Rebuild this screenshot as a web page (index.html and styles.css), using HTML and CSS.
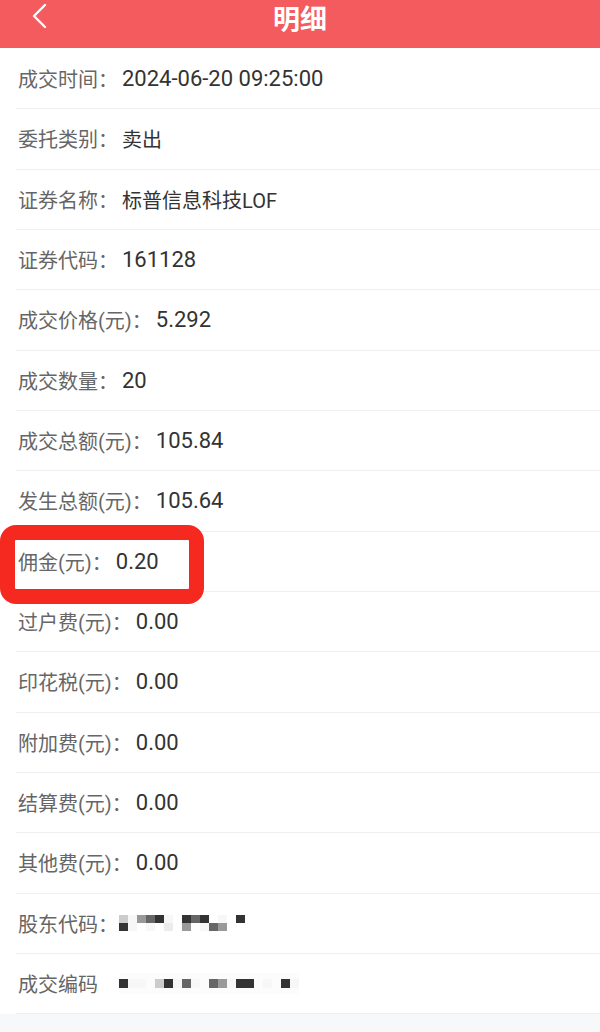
FILE: index.html
```html
<!DOCTYPE html>
<html lang="zh-CN">
<head>
    <meta charset="UTF-8">
    <meta name="viewport" content="width=device-width, initial-scale=1.0">
    <title>明细</title>
    <link rel="stylesheet" href="styles.css">
</head>
<body>
<div class="page">
    <header class="topbar">
        <a class="back" href="#">
            <svg width="16" height="26" viewBox="0 0 16 26">
                <polyline points="13,2 2,13 13,24" fill="none" stroke="#fff" stroke-width="2.4" stroke-linecap="round" stroke-linejoin="round"/>
            </svg>
        </a>
        <h1 class="title">明细</h1>
        <span></span>
    </header>

    <ul class="detail-list">
        <li class="row"><span class="label">成交时间：</span><span class="value">2024-06-20 09:25:00</span></li>
        <li class="row"><span class="label">委托类别：</span><span class="value cn">卖出</span></li>
        <li class="row"><span class="label">证券名称：</span><span class="value cn">标普信息科技LOF</span></li>
        <li class="row"><span class="label">证券代码：</span><span class="value">161128</span></li>
        <li class="row"><span class="label">成交价格(元)：</span><span class="value">5.292</span></li>
        <li class="row"><span class="label">成交数量：</span><span class="value">20</span></li>
        <li class="row"><span class="label">成交总额(元)：</span><span class="value">105.84</span></li>
        <li class="row"><span class="label">发生总额(元)：</span><span class="value">105.64</span></li>
        <li class="row"><span class="label">佣金(元)：</span><span class="value">0.20</span></li>
        <li class="row"><span class="label">过户费(元)：</span><span class="value">0.00</span></li>
        <li class="row"><span class="label">印花税(元)：</span><span class="value">0.00</span></li>
        <li class="row"><span class="label">附加费(元)：</span><span class="value">0.00</span></li>
        <li class="row"><span class="label">结算费(元)：</span><span class="value">0.00</span></li>
        <li class="row"><span class="label">其他费(元)：</span><span class="value">0.00</span></li>
        <li class="row">
            <span class="label">股东代码：</span>
            <span class="mosaic">
                <i class="l"></i><i class="f"></i><i class="s"></i><i class="g"></i><i class="d"></i><i class="f"></i><i></i><i class="d"></i><i class="g"></i><i class="d"></i><i></i><i class="f"></i><i></i><i class="d"></i>
                <i class="d"></i><i class="f"></i><i></i><i class="f"></i><i></i><i class="e"></i><i></i><i class="s"></i><i></i><i class="f"></i><i class="g"></i><i class="s"></i><i></i><i></i>
            </span>
        </li>
        <li class="row">
            <span class="label">成交编码</span>
            <span class="mosaic wide">
                <i class="d"></i><i class="f"></i><i class="f"></i><i></i><i class="l"></i><i class="d"></i><i class="f"></i><i class="g"></i><i class="f"></i><i></i><i class="g"></i><i class="s"></i><i class="f"></i><i class="d"></i><i class="d"></i><i></i><i class="f"></i><i></i><i class="d"></i><i class="f"></i>
            </span>
        </li>
    </ul>

    <div class="mark"></div>
</div>
</body>
</html>
```

FILE: styles.css
```css
body {
    margin: 0;
    background-color: #f7f8fa;
    font-family: Roboto, "Noto Sans CJK SC", sans-serif;
}

.page {
    position: relative;
    width: 600px;
}

.topbar {
    height: 48px;
    background-color: #f35b5e;
    display: grid;
    grid-template-columns: 1fr auto 1fr;
    align-items: start;
    padding: 0 32px;
    box-sizing: border-box;
}

.back {
    display: block;
    padding-top: 3px;
    width: 16px;
}

.title {
    margin: 0;
    padding-top: 1px;
    color: #fff;
    font-size: 27px;
    font-weight: bold;
    line-height: 34px;
    font-family: "Noto Sans CJK SC", sans-serif;
}

.detail-list {
    list-style: none;
    margin: 0;
    padding: 1px 0 0 16px;
    background-color: #fff;
}

.row {
    height: 60.33px;
    box-sizing: border-box;
    border-bottom: 1px solid #efefef;
    display: flex;
    align-items: center;
    padding-left: 2px;
}

.label {
    color: #666;
    font-size: 20px;
}

.value {
    margin-left: 4px;
    color: #333;
    font-size: 22px;
}

.value.cn {
    font-size: 20px;
}

.mosaic {
    margin-left: 1px;
    display: grid;
    grid-template-columns: repeat(14, 9px);
    grid-auto-rows: 8px;
}

.mosaic.wide {
    margin-left: 21px;
    grid-template-columns: repeat(20, 9px);
    grid-auto-rows: 9px;
    padding: 6px 0;
    background-color: #fcfcfc;
}

.mosaic i {
    display: block;
}

.mosaic .d { background-color: #333; }
.mosaic .g { background-color: #666; }
.mosaic .s { background-color: #999; }
.mosaic .l { background-color: #ccc; }
.mosaic .e { background-color: #ececec; }
.mosaic .f { background-color: #f7f7f7; }

.mark {
    position: absolute;
    left: 0;
    top: 525px;
    width: 204px;
    height: 79px;
    box-sizing: border-box;
    border: 15px solid #f5291f;
    border-radius: 16px;
}
```
